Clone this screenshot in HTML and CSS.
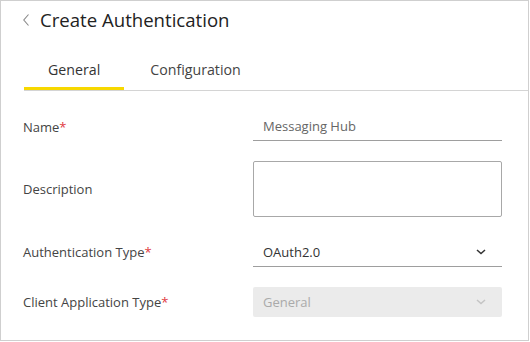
FILE: index.html
```html
<!DOCTYPE html>
<html lang="en">
  <head>
    <meta charset="UTF-8" />
    <meta name="viewport" content="width=device-width, initial-scale=1.0" />
    <title>Create Authentication</title>
    <link rel="stylesheet" href="styles.css">
  </head>
  <body>
    <div class="panel">
      <div class="header">
        <svg class="back-icon" width="6" height="12" viewBox="0 0 6 12">
          <path d="M5.5 0.5 L0.8 6 L5.5 11.5" fill="none" stroke="#8a8a8a" stroke-width="1.1" />
        </svg>
        <h1>Create Authentication</h1>
      </div>

      <div class="tabs">
        <div class="tab active">General</div>
        <div class="tab">Configuration</div>
      </div>

      <form class="form">
        <label class="label" for="name">Name<span class="req">*</span></label>
        <input class="field input" type="text" id="name" value="Messaging Hub" />

        <label class="label" for="description">Description</label>
        <textarea class="textarea" id="description"></textarea>

        <label class="label">Authentication Type<span class="req">*</span></label>
        <div class="field select">
          <span>OAuth2.0</span>
          <svg width="10" height="6" viewBox="0 0 10 6">
            <path d="M1 1 L5 4.6 L9 1" fill="none" stroke="#333" stroke-width="1.5" />
          </svg>
        </div>

        <label class="label">Client Application Type<span class="req">*</span></label>
        <div class="select disabled">
          <span>General</span>
          <svg width="10" height="6" viewBox="0 0 10 6">
            <path d="M1 1 L5 4.6 L9 1" fill="none" stroke="#c4c4c4" stroke-width="1.5" />
          </svg>
        </div>
      </form>
    </div>
  </body>
</html>
```

FILE: styles.css
```css
body {
  margin: 0;
  font-family: "Open Sans", sans-serif;
  color: #333;
  background: #ffffff;
}
.panel {
  box-sizing: border-box;
  width: 529px;
  height: 341px;
  border: 1px solid #cfcfcf;
  background: #ffffff;
}
.header {
  display: flex;
  align-items: center;
  gap: 11px;
  padding: 7px 0 0 22px;
  height: 24px;
}
.back-icon {
  display: block;
}
h1 {
  margin: 0;
  font-size: 18.6px;
  line-height: 24px;
  font-weight: 400;
  color: #222;
}
.tabs {
  display: flex;
  gap: 2px;
  margin: 28px 0 0 23px;
  border-bottom: 1px solid #d4d4d4;
}
.tab {
  padding: 0 24px 7px;
  font-size: 14.2px;
  line-height: 20px;
  color: #444;
  border-bottom: 3px solid transparent;
}
.tab.active {
  color: #333;
  border-bottom-color: #f7d800;
}
.form {
  display: grid;
  grid-template-columns: 230px 249px;
  grid-template-rows: 29px 56px 30px 30px;
  row-gap: 20px;
  align-items: center;
  padding: 21px 0 0 22px;
  margin: 0;
}
.label {
  font-size: 13px;
  color: #444;
}
.req {
  color: #e0393e;
}
.field {
  box-sizing: border-box;
  height: 100%;
  width: 100%;
  border: none;
  border-bottom: 1px solid #9e9e9e;
  padding: 0 10px;
  font-family: inherit;
  font-size: 13px;
  outline: none;
  background: transparent;
}
.input {
  color: #666;
}
.textarea {
  box-sizing: border-box;
  width: 100%;
  height: 100%;
  border: 1px solid #a8a8a8;
  border-radius: 2px;
  resize: none;
  font-family: inherit;
  outline: none;
}
.select {
  display: flex;
  align-items: center;
  justify-content: space-between;
  color: #333;
}
.select svg {
  margin-right: 6px;
}
.select.disabled {
  box-sizing: border-box;
  height: 100%;
  padding: 0 10px;
  font-size: 13px;
  background: #ebebeb;
  border-radius: 2px;
  color: #aaaaaa;
}
```
